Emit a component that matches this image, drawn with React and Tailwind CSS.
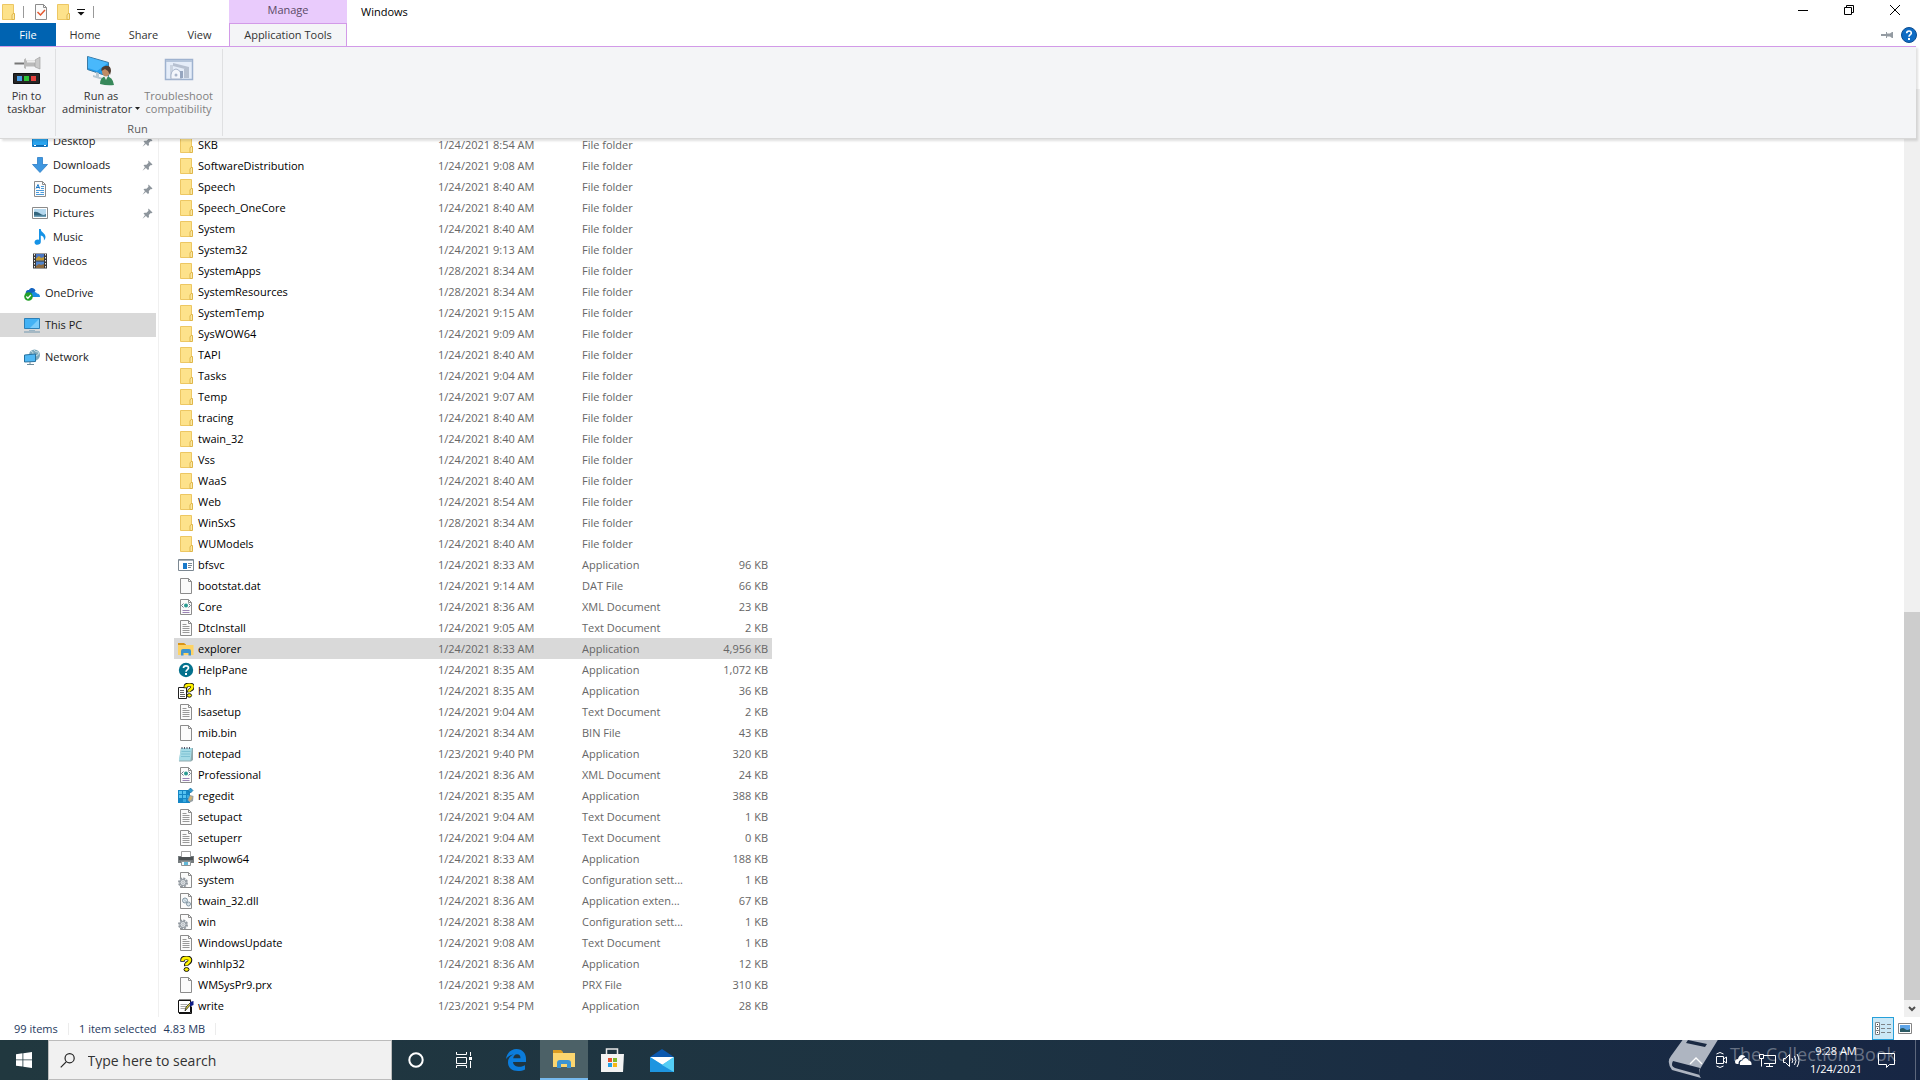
import React, { useState } from "react";

function FolderIcon() {
  return (
    <svg width="16" height="16" viewBox="0 0 16 16">
      <path d="M.5.5h11v15H.5z" fill="#fde28b" stroke="#edc763" />
      <path d="M11 9.5h1.500v6H10V11z" fill="#fbe9a5" stroke="#dfb64a" />
    </svg>
  );
}

function PageBase({ children }) {
  return (
    <svg width="16" height="16" viewBox="0 0 16 16">
      <path d="M2.5.5h8l3 3v12h-11z" fill="#fbfbfb" stroke="#8c8c8c" />
      <path d="M10.5.5v3h3" fill="none" stroke="#8c8c8c" />
      {children}
    </svg>
  );
}

function GearPage() {
  return (
    <PageBase>
      <circle cx="5" cy="10.5" r="4" fill="#e4e7ea" stroke="#9299a0" strokeWidth="2" strokeDasharray="2 1.1" />
      <circle cx="5" cy="10.5" r="3" fill="#dfe3e6" stroke="#8c949c" />
      <circle cx="5" cy="10.5" r="1" fill="#fff" stroke="#8c949c" strokeWidth=".6" />
    </PageBase>
  );
}

function QuestionMark() {
  return (
    <>
      <path d="M4.5 5.8V4Q4.500 1.800 8.500 1.800T12 4.300Q12 6 10 7t-1.800 3" fill="none" stroke="#111" strokeWidth="4.4" />
      <path d="M4.5 5V4.200Q4.500 2 8.500 2T11.800 4.300Q11.800 6 10 6.900T8.200 9.500" fill="none" stroke="#fff200" strokeWidth="2.8" />
      <ellipse cx="8.5" cy="13.5" rx="2.5" ry="1.9" fill="#fff200" stroke="#111" />
    </>
  );
}

const fileIcons = {
  folder: <FolderIcon />,
  page: <PageBase />,
  text: (
    <PageBase>
      <path d="M4.5 4.5h4M4.5 6.5h7M4.5 8.5h7M4.5 10.5h7M4.5 12.5h7" stroke="#9a9a9a" />
    </PageBase>
  ),
  xml: (
    <PageBase>
      <path d="m5.5 4.5-2 2 2 2M10.5 4.5l2 2-2 2" fill="none" stroke="#68788a" />
      <circle cx="8" cy="6.5" r="2" fill="#2a9a91" />
      <path d="M4.5 11.5h7M4.5 13.5h7" stroke="#9b83b4" />
    </PageBase>
  ),
  gear: <GearPage />,
  dll: (
    <PageBase>
      <circle cx="7" cy="7.5" r="2.5" fill="#dce8ef" stroke="#8497a4" />
      <circle cx="10.5" cy="11" r="2" fill="#dce8ef" stroke="#8497a4" />
      <path d="m6 6.5 4 4" stroke="#8497a4" strokeWidth=".7" />
    </PageBase>
  ),
  app: (
    <svg width="16" height="16" viewBox="0 0 16 16">
      <path d="M.5 2.5h15v11H.5z" fill="#fff" stroke="#7c8892" />
      <path d="M1 3h14v1H1z" fill="#a9b3bb" />
      <path d="M5 6h4v6H5z" fill="#1979ca" />
      <path d="M10 6.500h4M10 8.500h4M10 10.500h3" stroke="#7c8892" />
    </svg>
  ),
  explorer: (
    <svg width="16" height="16" viewBox="0 0 16 16">
      <path d="M0 2h6l2 1.500v3H0z" fill="#d99416" />
      <path d="M0 4h15.500v10H0z" fill="#fdd365" />
      <path d="M3 14.500V10q0-2 2-2h6q2 0 2 2v4.500h-2.500V12h-5v2.500z" fill="#3b93cf" />
    </svg>
  ),
  help: (
    <svg width="16" height="16" viewBox="0 0 16 16">
      <circle cx="8" cy="8" r="7.2" fill="#04718d" />
      <path d="M5.500 6Q5.500 3.800 8 3.800T10.500 6C10.500 7.500 8 7.700 8 9.800" fill="none" stroke="#fff" strokeWidth="1.7" />
      <path d="M7 11h2v2H7z" fill="#fff" />
    </svg>
  ),
  hh: (
    <svg width="16" height="16" viewBox="0 0 16 16">
      <path d="M.5 4.500h8v11h-8z" fill="#fff" stroke="#222" />
      <path d="M2 7.500h4M2 9.500h4M2 11.500h5M2 13.500h5" stroke="#666" />
      <g transform="translate(3.5 0) scale(.92)"><QuestionMark /></g>
    </svg>
  ),
  winhlp: (
    <svg width="16" height="16" viewBox="0 0 16 16"><QuestionMark /></svg>
  ),
  notepad: (
    <svg width="16" height="16" viewBox="0 0 16 16">
      <path d="M3 2h12v12l-2 1.500H1z" fill="#8fa9ad" />
      <path d="M3 2h11l-1.500 12.500H.8z" fill="#a5dbe6" />
      <path d="M3.500 5.500h9M3.200 8h9M3 10.500h9" stroke="#7fc2d3" />
      <path d="M4 1v2M6.500 1v2M9 1v2M11.500 1v2" stroke="#556" />
    </svg>
  ),
  regedit: (
    <svg width="16" height="16" viewBox="0 0 16 16">
      <path d="M0 2h12v13H0z" fill="#1586c5" />
      <path d="M1 3h3v3H1zM5 3h3v3H5zM1 7h3v3H1zM5 7h3v3H5z" fill="#57c3f1" />
      <path d="M5 11h3v3H5zM9 7h2v3H9z" fill="#36a9df" />
      <path d="m12.500 0 2.500 2.500L12.500 5 10 2.500z" fill="#2d9ad0" stroke="#13628e" strokeWidth=".6" />
      <path d="m12 7 3.500 1-.5 5-3 1.500L9.500 12z" fill="#98a0a2" />
      <path d="m12 8 2.500 1-1.500 3-2 1z" fill="#d4b36c" />
    </svg>
  ),
  printer: (
    <svg width="16" height="16" viewBox="0 0 16 16">
      <path d="M3.500.5h9v6h-9z" fill="#fff" stroke="#a4a4a4" />
      <path d="M0 5h3v1.500h10V5h3v7H0z" fill="#777d80" />
      <path d="M1 6h14v3H1z" fill="#4d5254" />
      <path d="M3.500 10.500h9v4h-9z" fill="#f4f8fa" stroke="#8e9496" />
      <path d="M6 11h4v3H6z" fill="#62b8d8" />
    </svg>
  ),
  write: (
    <svg width="16" height="16" viewBox="0 0 16 16">
      <path d="M.5 2.500h12v12H.5z" fill="#fff" stroke="#111" />
      <path d="M1 15.500h12.500v-7" fill="none" stroke="#111" />
      <path d="M2 1v2M4 1v2M6 1v2M8 1v2M10 1v2M12 1v2" stroke="#111" />
      <path d="M2.500 6.500h7M2.500 8.500h6M2.500 10.500h5" stroke="#aaa" />
      <path d="m14 5-7 8 1-4 5-5z" fill="#d7ca3a" stroke="#111" strokeWidth=".7" />
      <path d="m12 4 3.500-1v4L12 8.500z" fill="#101e86" />
    </svg>
  ),
};

const files = [
  ["folder", "SKB", "1/24/2021 8:54 AM", "File folder", ""],
  ["folder", "SoftwareDistribution", "1/24/2021 9:08 AM", "File folder", ""],
  ["folder", "Speech", "1/24/2021 8:40 AM", "File folder", ""],
  ["folder", "Speech_OneCore", "1/24/2021 8:40 AM", "File folder", ""],
  ["folder", "System", "1/24/2021 8:40 AM", "File folder", ""],
  ["folder", "System32", "1/24/2021 9:13 AM", "File folder", ""],
  ["folder", "SystemApps", "1/28/2021 8:34 AM", "File folder", ""],
  ["folder", "SystemResources", "1/28/2021 8:34 AM", "File folder", ""],
  ["folder", "SystemTemp", "1/24/2021 9:15 AM", "File folder", ""],
  ["folder", "SysWOW64", "1/24/2021 9:09 AM", "File folder", ""],
  ["folder", "TAPI", "1/24/2021 8:40 AM", "File folder", ""],
  ["folder", "Tasks", "1/24/2021 9:04 AM", "File folder", ""],
  ["folder", "Temp", "1/24/2021 9:07 AM", "File folder", ""],
  ["folder", "tracing", "1/24/2021 8:40 AM", "File folder", ""],
  ["folder", "twain_32", "1/24/2021 8:40 AM", "File folder", ""],
  ["folder", "Vss", "1/24/2021 8:40 AM", "File folder", ""],
  ["folder", "WaaS", "1/24/2021 8:40 AM", "File folder", ""],
  ["folder", "Web", "1/24/2021 8:54 AM", "File folder", ""],
  ["folder", "WinSxS", "1/28/2021 8:34 AM", "File folder", ""],
  ["folder", "WUModels", "1/24/2021 8:40 AM", "File folder", ""],
  ["app", "bfsvc", "1/24/2021 8:33 AM", "Application", "96 KB"],
  ["page", "bootstat.dat", "1/24/2021 9:14 AM", "DAT File", "66 KB"],
  ["xml", "Core", "1/24/2021 8:36 AM", "XML Document", "23 KB"],
  ["text", "DtcInstall", "1/24/2021 9:05 AM", "Text Document", "2 KB"],
  ["explorer", "explorer", "1/24/2021 8:33 AM", "Application", "4,956 KB"],
  ["help", "HelpPane", "1/24/2021 8:35 AM", "Application", "1,072 KB"],
  ["hh", "hh", "1/24/2021 8:35 AM", "Application", "36 KB"],
  ["text", "lsasetup", "1/24/2021 9:04 AM", "Text Document", "2 KB"],
  ["page", "mib.bin", "1/24/2021 8:34 AM", "BIN File", "43 KB"],
  ["notepad", "notepad", "1/23/2021 9:40 PM", "Application", "320 KB"],
  ["xml", "Professional", "1/24/2021 8:36 AM", "XML Document", "24 KB"],
  ["regedit", "regedit", "1/24/2021 8:35 AM", "Application", "388 KB"],
  ["text", "setupact", "1/24/2021 9:04 AM", "Text Document", "1 KB"],
  ["text", "setuperr", "1/24/2021 9:04 AM", "Text Document", "0 KB"],
  ["printer", "splwow64", "1/24/2021 8:33 AM", "Application", "188 KB"],
  ["gear", "system", "1/24/2021 8:38 AM", "Configuration sett...", "1 KB"],
  ["dll", "twain_32.dll", "1/24/2021 8:36 AM", "Application exten...", "67 KB"],
  ["gear", "win", "1/24/2021 8:38 AM", "Configuration sett...", "1 KB"],
  ["text", "WindowsUpdate", "1/24/2021 9:08 AM", "Text Document", "1 KB"],
  ["winhlp", "winhlp32", "1/24/2021 8:36 AM", "Application", "12 KB"],
  ["page", "WMSysPr9.prx", "1/24/2021 9:38 AM", "PRX File", "310 KB"],
  ["write", "write", "1/23/2021 9:54 PM", "Application", "28 KB"],
];

const navIcons = {
  Desktop: (
    <svg width="16" height="16" viewBox="0 0 16 16">
      <path d="M.5 2.500h15v11H.5z" fill="#2aa4ee" stroke="#1580cc" />
      <path d="M1 12h14v1.500H1z" fill="#0e68ae" />
      <path d="M2 12.500h2M12 12.500h2" stroke="#fff" />
    </svg>
  ),
  Downloads: (
    <svg width="16" height="16" viewBox="0 0 16 16">
      <path d="M5.500.5h5v7h5L8 15.500.5 7.500h5z" fill="#3e97e0" stroke="#2b7cc6" strokeWidth=".8" />
    </svg>
  ),
  Documents: (
    <PageBase>
      <path d="m4 7.500 2-4 1.500 4M4.500 6.500h3" fill="none" stroke="#1979ca" />
      <path d="M9 5.500h3M9 7.500h3M4 9.500h8M4 11.500h3M8.500 11.500h3.500M4 13.500h8" stroke="#4c9ad9" />
    </PageBase>
  ),
  Pictures: (
    <svg width="16" height="16" viewBox="0 0 16 16">
      <path d="M.5 2.500h15v11H.5z" fill="#fff" stroke="#8b8b8b" />
      <path d="M2 4h12v8H2z" fill="#b6d9ef" />
      <path d="M2 7q3-1 6 1.500t6 .5v3H2z" fill="#33657d" />
      <path d="M2 10.500h12V12H2z" fill="#6fa0b8" />
    </svg>
  ),
  Music: (
    <svg width="16" height="16" viewBox="0 0 16 16">
      <path d="M7 0h1.800c0 3.500 4.700 4 4.700 8 0 1.500-.8 2.700-1.600 3.500.5-3-1-4.500-3.100-5V13c0 1.800-1.700 2.800-3.500 2.800S2.500 14.600 2.500 13.200s1.400-2.700 3.300-2.700q.6 0 1.200.2z" fill="#1592e6" />
    </svg>
  ),
  Videos: (
    <svg width="16" height="16" viewBox="0 0 16 16">
      <path d="M1 .5h14v15H1z" fill="#383838" />
      <path d="M4 1h8v6.500H4z" fill="#4a77c4" />
      <path d="M4 8.500h8V15H4z" fill="#5286cd" />
      <path d="M4 5.500 7 3l2 2 3-1v3.500H4z" fill="#c39a32" />
      <path d="m4 13 3-2 2 1 3-1v4H4z" fill="#8e6b3e" />
      <path d="M2.500 1v15M13.500 1v15" stroke="#eee" strokeDasharray="1.5 1.5" />
    </svg>
  ),
  OneDrive: (
    <svg width="16" height="16" viewBox="0 0 16 16">
      <path d="M2 9C1 6 3.500 4.500 5 5c1.500-3 5.500-2.500 6.500.5L8 11z" fill="#1464c0" />
      <path d="M7 12q-1-4 2.500-5 3-.5 3.500 1.500 3 .3 3 3.500z" fill="#1a8ce4" />
      <circle cx="4.5" cy="11.5" r="4.3" fill="#25a02a" />
      <path d="m2.300 11.500 1.600 1.700 3-3.200" fill="none" stroke="#fff" strokeWidth="1.3" />
    </svg>
  ),
  "This PC": (
    <svg width="16" height="16" viewBox="0 0 16 16">
      <path d="M.5 1.500h15v10H.5z" fill="#43b2f5" stroke="#2c7fb6" />
      <path d="M15 2v9H6z" fill="#7accfb" />
      <path d="M5 13.500h6" stroke="#9bb5c5" />
      <path d="M0 15h16" stroke="#7397ae" />
    </svg>
  ),
  Network: (
    <svg width="16" height="16" viewBox="0 0 16 16">
      <circle cx="10.5" cy="6" r="5.5" fill="#7da9bc" />
      <path d="M7 2q3 1 2 4l3 1q3-1 3-4M10 1q1 2 4 2" fill="none" stroke="#c8dfe5" />
      <path d="M.5 6 11.500 5v7.500L.5 13z" fill="#50b8f4" stroke="#27719e" />
      <path d="M3 15.500h7M6 13v2" stroke="#6e8b9b" />
    </svg>
  ),
};

const quickAccess = [
  { name: "Desktop", pinned: true },
  { name: "Downloads", pinned: true },
  { name: "Documents", pinned: true },
  { name: "Pictures", pinned: true },
  { name: "Music", pinned: false },
  { name: "Videos", pinned: false },
];

function PinIcon() {
  return (
    <svg width="11" height="11" viewBox="0 0 11 11" fill="#8d959c">
      <path d="m6.500.5 4 4-1 .8-.7-.2-2 2 .2 2-1 .9L1.500 5.500l1-.8 2 .1 2-2-.3-1z" />
      <path d="m3.200 6.800 1 1L.5 10.700z" />
    </svg>
  );
}

function RibbonPinIcon() {
  return (
    <svg width="28" height="32" viewBox="0 0 28 32">
      <path d="M1.500 8.500h12" stroke="#777" strokeWidth="2" />
      <path d="M11 4.500 13 3v11l-2-1zM13 5.500h9v6h-9z" fill="#b9b9b9" />
      <path d="m22 5 5-3v12l-5-2z" fill="#c9c9c9" stroke="#999" strokeWidth=".6" />
      <path d="M14 6.500h8" stroke="#eee" strokeWidth="2" />
      <path d="M.5 18.500h26v10H.5z" fill="#252525" stroke="#111" />
      <path d="M4 21h5v5H4z" fill="#4b9fe6" />
      <path d="M11 21h5v5h-5z" fill="#2dc336" />
      <path d="M18 21h5v5h-5z" fill="#e4413c" />
    </svg>
  );
}

function RunAdminIcon() {
  return (
    <svg width="30" height="32" viewBox="0 0 30 32">
      <path d="m1.500 1.500 21 6v14l-21-7z" fill="#219bea" stroke="#397aa5" />
      <path d="m2 2 20 6-11 8-9-3z" fill="#49b8fb" />
      <path d="m7 20 10 3v2L7 22zM10 17l3 1v4l-3-1z" fill="#b8c8d2" />
      <path d="M14 29q0-7 6-8 7 1 8 9-7 1-14-1z" fill="#37885a" />
      <path d="m18 21 2 4 2-4z" fill="#eee" />
      <ellipse cx="20" cy="16.5" rx="4" ry="5" fill="#bf8b64" />
      <path d="M15.500 16q-1-4 3.500-5 6-1 6 5l-1 4-2-4-3-2z" fill="#513d31" />
    </svg>
  );
}

function TroubleshootIcon() {
  return (
    <svg width="30" height="32" viewBox="0 0 30 32">
      <path d="M1.500 4.500h27v20h-27z" fill="#e5edf9" stroke="#9eb2cf" strokeWidth="1.5" />
      <path d="M2 5h26v2H2z" fill="#b5c5db" />
      <path d="m9 8 16 4v3L9 11zM20 14h5v9h-5z" fill="#b7c1d1" />
      <path d="M6 10h3v13H6z" fill="#cbd4e1" />
      <path d="M7 24q-1-9 5-10 6 1 5 10z" fill="#f3f6fb" stroke="#a9b6cb" />
      <circle cx="12" cy="20" r="1.5" fill="#a9b6cb" />
      <path d="M16 16h3v7h-3z" fill="#95a5bf" />
    </svg>
  );
}

function NavItem({ name, pinned, active, nested }) {
  return (
    <a
      href="#"
      className={`flex h-6 items-center gap-[5px] pr-[3px] ${nested ? "pl-8" : "pl-6"} ${active ? "bg-[#d9d9d9]" : ""}`}
    >
      {navIcons[name]}
      <span className="flex-1">{name}</span>
      {pinned ? <PinIcon /> : null}
    </a>
  );
}

function TitleBar() {
  return (
    <header className="flex h-[46px] shrink-0 text-[#333]">
      <div className="flex w-[229px] flex-col">
        <div className="flex h-[23px] items-center pl-[2px]">
          <FolderIcon />
          <span className="ml-[5px] h-3 w-px bg-[#999]" />
          <button type="button" aria-label="Properties" className="ml-[9px]">
            <PageBase>
              <path d="m4.500 8 3 3L12 6" fill="none" stroke="#e4572e" strokeWidth="1.5" />
            </PageBase>
          </button>
          <button type="button" aria-label="New folder" className="ml-2"><FolderIcon /></button>
          <button type="button" aria-label="Customize Quick Access Toolbar" className="ml-1">
            <svg width="8" height="8" viewBox="0 0 8 8" fill="#111"><path d="M0 1h8v1H0zM.5 4h7L4 7.500z" /></svg>
          </button>
          <span className="ml-2 h-3 w-px bg-[#999]" />
        </div>
        <nav className="flex h-[23px]">
          <button type="button" className="w-14 bg-[#0063b1] text-white">File</button>
          <button type="button" className="w-[58px]">Home</button>
          <button type="button" className="w-[59px]">Share</button>
          <button type="button" className="w-[53px]">View</button>
        </nav>
      </div>
      <div className="flex w-[118px] flex-col">
        <div className="flex h-[23px] items-center justify-center bg-[#e9cbfc] pb-[3px] text-[#5a4a66]">Manage</div>
        <button type="button" className="relative z-10 h-6 border border-b-0 border-[#d29ae8] bg-[#f4f5f7]">
          Application Tools
        </button>
      </div>
      <h1 className="pt-1 pl-[14px] leading-4 text-black">Windows</h1>
      <div className="ml-auto flex flex-col items-end">
        <div className="mr-[2px] flex h-[23px]">
          <button type="button" aria-label="Minimize" className="flex w-[46px] justify-center pt-[5px]">
            <svg width="10" height="10" viewBox="0 0 10 10"><path d="M0 5.500h10" stroke="#000" /></svg>
          </button>
          <button type="button" aria-label="Restore" className="flex w-[46px] justify-center pt-[5px]">
            <svg width="10" height="10" viewBox="0 0 10 10" fill="none" stroke="#000"><path d="M.5 2.500h7v7h-7zM2.500 2V.5h7v7H8" /></svg>
          </button>
          <button type="button" aria-label="Close" className="flex w-[46px] justify-center pt-[5px]">
            <svg width="10" height="10" viewBox="0 0 10 10"><path d="m0 0 10 10M10 0 0 10" stroke="#000" /></svg>
          </button>
        </div>
        <div className="flex h-[23px] items-center gap-2 pr-[3px]">
          <button type="button" aria-label="Pin the ribbon">
            <svg width="12" height="8" viewBox="0 0 12 8" fill="#949ba2"><path d="M0 3h5v2H0zM5 1h1v1.500h3L11 1h1v6h-1L9 5.500H6V7H5z" /></svg>
          </button>
          <button type="button" aria-label="Help">
            <svg width="16" height="16" viewBox="0 0 16 16">
              <circle cx="8" cy="8" r="7.5" fill="#0f6cc4" stroke="#0c4d91" />
              <path d="M5.700 6.300Q5.700 4 8 4t2.300 2.200C10.300 7.600 8 7.600 8 9.800" fill="none" stroke="#fff" strokeWidth="1.6" />
              <path d="M7 11h2v2H7z" fill="#fff" />
            </svg>
          </button>
        </div>
      </div>
    </header>
  );
}

function Ribbon() {
  return (
    <div className="flex h-[93px] shrink-0">
      <section className="z-[5] flex flex-1 border-t border-b border-t-[#d29ae8] border-b-[#d8d8d8] bg-[#f4f5f7] leading-[13px] text-[#333] shadow-[2px_2px_2px_rgba(0,0,0,0.12)]">
        <div className="my-[2px] flex w-14 justify-center border-r border-[#dfe0e2] pt-[6px] pr-[2px]">
          <button type="button" className="flex flex-col items-center">
            <RibbonPinIcon />
            <span className="mt-[2px]">Pin to<br />taskbar</span>
          </button>
        </div>
        <div className="my-[2px] flex w-[167px] flex-col items-center border-r border-[#dfe0e2] pt-[6px] pr-[3px]">
          <div className="flex gap-1">
            <button type="button" className="flex flex-col items-center">
              <RunAdminIcon />
              <span className="mt-[2px]">Run as</span>
              <span className="flex items-center gap-[3px]">
                administrator
                <svg width="5" height="3" viewBox="0 0 5 3"><path d="M0 0h5L2.500 3z" fill="#222" /></svg>
              </span>
            </button>
            <button type="button" disabled className="flex flex-col items-center text-[#808080]">
              <TroubleshootIcon />
              <span className="mt-[2px]">Troubleshoot<br />compatibility</span>
            </button>
          </div>
          <span className="mt-[7px] text-[#5a5a5a]">Run</span>
        </div>
      </section>
      <div className="w-1 bg-[#f0f0f0]">
        <div className="h-[43px] bg-white" />
      </div>
    </div>
  );
}

function FileTable({ selected, onSelect }) {
  return (
    <table className="-mt-[5px] w-[598px] table-fixed border-collapse">
      <colgroup>
        <col className="w-[264px]" />
        <col className="w-36" />
        <col className="w-[110px]" />
        <col />
      </colgroup>
      <tbody>
        {files.map(([icon, name, date, type, size]) => (
          <tr
            key={name}
            onClick={() => onSelect(name)}
            className={`h-[21px] text-[#666] ${selected === name ? "bg-[#d9d9d9]" : ""}`}
          >
            <td className="p-0 pl-1 text-black">
              <div className={`flex items-center ${icon === "folder" ? "gap-[2px] pl-[2px]" : "gap-1"}`}>
                {fileIcons[icon]}
                <span>{name}</span>
              </div>
            </td>
            <td className="p-0">{date}</td>
            <td className="p-0 whitespace-nowrap">{type}</td>
            <td className="p-0 pr-1 text-right">{size}</td>
          </tr>
        ))}
      </tbody>
    </table>
  );
}

function ScrollBar() {
  return (
    <div className="flex w-4 flex-col bg-[#f0f0f0]">
      <div className="flex-[473]" />
      <div className="flex-[388] bg-[#cdcdcd]" />
      <button type="button" aria-label="Scroll down" className="flex h-[17px] items-center justify-center">
        <svg width="8" height="6" viewBox="0 0 8 6"><path d="m1 1 3 3 3-3" fill="none" stroke="#505050" strokeWidth="2" /></svg>
      </button>
    </div>
  );
}

function StatusBar() {
  return (
    <footer className="flex h-[23px] shrink-0 items-center text-[#26395e]">
      <span className="w-[68px] pl-[14px]">99 items</span>
      <span className="h-3 w-px bg-[#ececec]" />
      <span className="pl-[10px]">1 item selected</span>
      <span className="pl-[7px]">4.83 MB</span>
      <span className="ml-[10px] h-3 w-px bg-[#ececec]" />
      <button type="button" aria-label="Details view" className="ml-auto flex h-[23px] w-[22px] items-center justify-center border border-[#26a0da] bg-[#cbe8f6]">
        <svg width="16" height="13" viewBox="0 0 16 13" fill="none" stroke="#7d8488">
          <path d="M.5.5h4v12h-4zM.5 4.500h4M.5 8.500h4" fill="#fff" />
          <path d="M6 2.500h4M12 2.500h4M6 6.500h4M12 6.500h4M6 10.500h4M12 10.500h4" />
          <path d="M2 2.500h1M2 6.500h1M2 10.500h1" stroke="#333" />
        </svg>
      </button>
      <button type="button" aria-label="Large icons view" className="mr-2 ml-1">
        <svg width="14" height="11" viewBox="0 0 14 11">
          <path d="M.5.5h13v10H.5z" fill="#fff" stroke="#858585" />
          <path d="M2 2h10v7H2z" fill="#5fa5e8" />
          <path d="M2 6q3-2 5 0t5 0v3H2z" fill="#2b5a63" />
        </svg>
      </button>
    </footer>
  );
}

function TaskButton({ label, active, children }) {
  return (
    <button
      type="button"
      aria-label={label}
      className={`flex w-12 items-center justify-center ${active ? "border-b-2 border-[#76b9ed] bg-[#4c6167]" : ""}`}
    >
      {children}
    </button>
  );
}

function Watermark() {
  return (
    <div className="pointer-events-none absolute top-0 right-6 flex h-10 items-start overflow-hidden text-white/35">
      <svg width="50" height="40" viewBox="0 0 50 40">
        <path d="M16-2h35L32 29q-2 6 1 9L4 30Q-2 22 3 16z" fill="#aeb5c1" />
        <path d="M5 21q-3 5 2 7l25 7q-2-4 0-7z" fill="#1a2942" />
        <path d="m20 0 19 4-2 3-19-4z" fill="#1a2942" />
      </svg>
      <span className="ml-3 text-[18px] leading-7">The Collection Book</span>
    </div>
  );
}

function Taskbar() {
  return (
    <div className="relative flex h-10 shrink-0 bg-linear-to-r from-[#21383f] via-[#1d3342] to-[#172644] text-white">
      <TaskButton label="Start">
        <svg width="16" height="16" viewBox="0 0 16 16" fill="#fff">
          <path d="m0 2.200 6.500-.9v6.200H0zM7.300 1.200 16 0v7.500H7.300zM0 8.300h6.500v6.300L0 13.700zM7.300 8.300H16V16l-8.700-1.200z" />
        </svg>
      </TaskButton>
      <label className="flex w-[344px] items-center border border-[#bcbcbc] bg-[#f1f1f1] pl-[11px] text-black">
        <svg width="17" height="17" viewBox="0 0 17 17" fill="none" stroke="#222" strokeWidth="1.3">
          <circle cx="10.5" cy="6" r="5" />
          <path d="M7 9.700.8 16" />
        </svg>
        <input
          type="text"
          aria-label="Search"
          placeholder="Type here to search"
          className="ml-3 w-full bg-transparent pt-[2px] text-[14px] outline-none placeholder:text-[#333]"
        />
      </label>
      <TaskButton label="Cortana">
        <svg width="16" height="16" viewBox="0 0 16 16"><circle cx="8" cy="8" r="6.7" fill="none" stroke="#fff" strokeWidth="2" /></svg>
      </TaskButton>
      <TaskButton label="Task View">
        <svg width="16" height="16" viewBox="0 0 16 16" fill="none" stroke="#fff">
          <path d="M.5 0v2.500h10V0M.5 5.500h10v6H.5zM.5 16v-2.500h10V16M14.500 0v4M14.500 9v7" />
          <path d="M13 5h3v3h-3z" fill="#fff" stroke="none" />
        </svg>
      </TaskButton>
      <div className="ml-1 flex">
        <TaskButton label="Microsoft Edge">
          <svg width="22" height="22" viewBox="0 0 22 22" fill="#0b7cdb">
            <path d="M1 10C2 3.500 6.500 0 11.500 0 17.500 0 21 4.500 21 9.500V13H8c.3 3.500 3.500 4.700 6.500 4.700 2.200 0 4-.6 5.500-1.500v4.300c-2 1-4.300 1.500-7 1.500C7 22 3 18.500 3 13.500c0-4 2-6.500 5.500-8C5.500 5.800 3 7.500 1 10zm7.200-.8h7.300c0-2.500-1.200-4-3.500-4-2.200 0-3.500 1.700-3.800 4z" />
          </svg>
        </TaskButton>
        <TaskButton label="File Explorer" active>
          <svg width="22" height="19" viewBox="0 0 22 19">
            <path d="M0 0h8l2 2v3H0z" fill="#dc9d22" />
            <path d="M0 3h22v14H0z" fill="#fcd66f" />
            <path d="M4 18v-5q0-3 3-3h8q3 0 3 3v5h-4v-4H8v4z" fill="#3c94d3" />
          </svg>
        </TaskButton>
        <TaskButton label="Microsoft Store">
          <svg width="24" height="24" viewBox="0 0 24 24">
            <path d="M6.500 7V1h11v6" fill="none" stroke="#e8e8e8" strokeWidth="1.5" />
            <path d="M1 6h23l-1 18H1z" fill="#f3f3f3" />
            <path d="M8 10h4v4H8z" fill="#e75330" />
            <path d="M13 10h4v4h-4z" fill="#7fb92c" />
            <path d="M8 15h4v4H8z" fill="#22a1e8" />
            <path d="M13 15h4v4h-4z" fill="#f7b716" />
          </svg>
        </TaskButton>
        <TaskButton label="Mail">
          <svg width="24" height="23" viewBox="0 0 24 23" className="ml-1">
            <path d="m12 0 12 8H0z" fill="#0c58ae" />
            <path d="M0 8h24v15H0z" fill="#32b4ee" />
            <path d="M0 8h24l-12 8z" fill="#fff" />
            <path d="m0 8 24 15H0z" fill="#1e95e0" />
            <path d="M24 8v15L12 16z" fill="#54cdf5" />
          </svg>
        </TaskButton>
      </div>
      <Watermark />
      <div className="z-10 ml-auto flex items-center gap-[7px]">
        <button type="button" aria-label="Show hidden icons">
          <svg width="14" height="9" viewBox="0 0 14 9"><path d="m1 8 6-6 6 6" fill="none" stroke="#fff" strokeWidth="1.3" /></svg>
        </button>
        <button type="button" aria-label="Meet Now" className="ml-1">
          <svg width="14" height="18" viewBox="0 0 14 18" fill="none" stroke="#fff">
            <path d="M2.500 5.500h7v7h-7zM9.500 8l3-2v6l-3-2M2.500 3Q6 0 9.500 3M2.500 15q3.500 3 7 0" />
          </svg>
        </button>
        <button type="button" aria-label="OneDrive">
          <svg width="17" height="12" viewBox="0 0 17 12" fill="#fff">
            <path d="M0 8Q0 5 3 5q1-4 4-4 2.500 0 3.500 2-3 0-4 3-3 0-3 4H2Q0 10 0 8z" />
            <path d="M5 11q-1-4 2.500-4.500Q8.500 3.500 11 4q2 .5 2.500 2.500Q17 7 16.500 11z" />
          </svg>
        </button>
        <button type="button" aria-label="Network">
          <svg width="17" height="14" viewBox="0 0 17 14" fill="none" stroke="#fff">
            <path d="M5 2.500h11.500v8H5M10.500 10.500v3M7 13.500h7M.5 1.500h4v4h-4zM2.500 5.500v8" />
          </svg>
        </button>
        <button type="button" aria-label="Volume">
          <svg width="17" height="15" viewBox="0 0 17 15" fill="none" stroke="#fff">
            <path d="M.5 5.500h2l4-4v12l-4-4h-2zM9 5q1.500 2.500 0 5M11.500 3q3 4.500 0 9M14 1q4 6.500 0 13" />
          </svg>
        </button>
        <button type="button" className="ml-[2px] w-[54px] text-center leading-[18px]">9:28 AM<br />1/24/2021</button>
        <button type="button" aria-label="Notifications" className="ml-2 w-[18px]">
          <svg width="17" height="17" viewBox="0 0 17 17" fill="none" stroke="#fff">
            <path d="M.5 1.500h16v11h-5l-3 3v-3h-8z" />
          </svg>
        </button>
        <div className="ml-3 h-10 w-[5px] border-l border-white/30" />
      </div>
    </div>
  );
}

export default function App() {
  const [selected, setSelected] = useState("explorer");

  return (
    <div className="flex h-screen flex-col overflow-hidden bg-white font-['Open_Sans',sans-serif] text-[11px] leading-4">
      <TitleBar />
      <Ribbon />
      <main className="flex min-h-0 flex-1">
        <aside className="w-[159px] overflow-hidden border-r border-[#f0f0f0] pr-[2px]">
          <nav className="-mt-[10px] flex flex-col gap-2 text-[#1a1a1a]">
            <div>
              {quickAccess.map((item) => (
                <NavItem key={item.name} name={item.name} pinned={item.pinned} nested />
              ))}
            </div>
            <NavItem name="OneDrive" />
            <NavItem name="This PC" active />
            <NavItem name="Network" />
          </nav>
        </aside>
        <section className="flex-1 overflow-hidden pl-[15px]">
          <FileTable selected={selected} onSelect={setSelected} />
        </section>
        <ScrollBar />
      </main>
      <StatusBar />
      <Taskbar />
    </div>
  );
}
